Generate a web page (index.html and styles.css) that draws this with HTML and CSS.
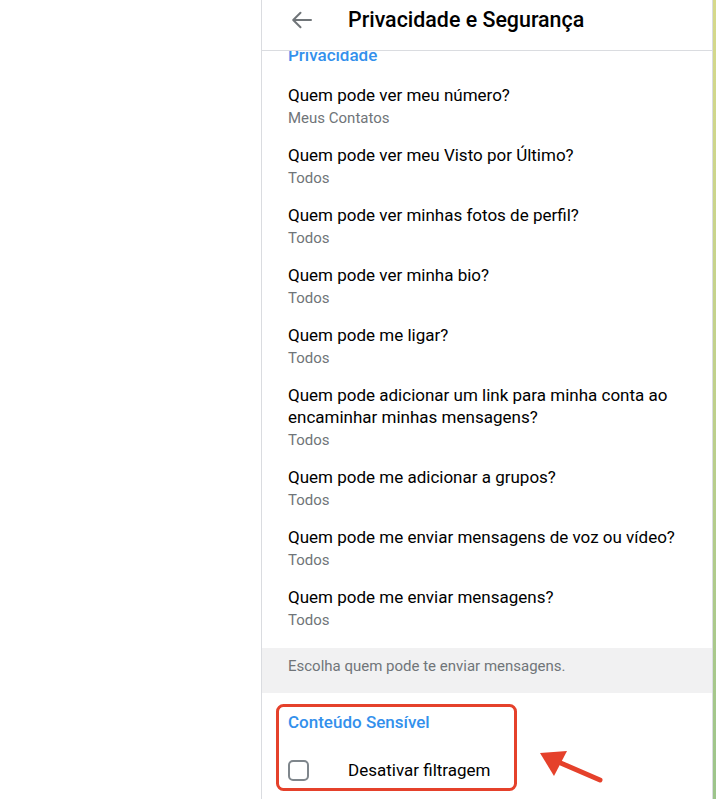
FILE: index.html
```html
<!DOCTYPE html>
<html lang="pt">
<head>
    <meta charset="UTF-8">
    <meta name="viewport" content="width=device-width, initial-scale=1.0">
    <title>Privacidade e Segurança</title>
    <link rel="stylesheet" href="styles.css">
</head>
<body>
    <div class="page">
        <div class="sidebar"></div>

        <div class="panel">
            <div class="panel-header">
                <button class="back-btn" aria-label="Voltar">
                    <svg width="24" height="24" viewBox="0 0 24 24">
                        <path d="M21 12H3.5M10.5 4.7L3.2 12 10.5 19.3" fill="none" stroke="#707579" stroke-width="2" stroke-linecap="round" stroke-linejoin="round"/>
                    </svg>
                </button>
                <span class="panel-title">Privacidade e Segurança</span>
            </div>

            <div class="panel-body">
                <div class="section">
                    <div class="section-title">Privacidade</div>

                    <div class="row">
                        <div class="row-title">Quem pode ver meu número?</div>
                        <div class="row-subtitle">Meus Contatos</div>
                    </div>
                    <div class="row">
                        <div class="row-title">Quem pode ver meu Visto por Último?</div>
                        <div class="row-subtitle">Todos</div>
                    </div>
                    <div class="row">
                        <div class="row-title">Quem pode ver minhas fotos de perfil?</div>
                        <div class="row-subtitle">Todos</div>
                    </div>
                    <div class="row">
                        <div class="row-title">Quem pode ver minha bio?</div>
                        <div class="row-subtitle">Todos</div>
                    </div>
                    <div class="row">
                        <div class="row-title">Quem pode me ligar?</div>
                        <div class="row-subtitle">Todos</div>
                    </div>
                    <div class="row">
                        <div class="row-title">Quem pode adicionar um link para minha conta ao encaminhar minhas mensagens?</div>
                        <div class="row-subtitle">Todos</div>
                    </div>
                    <div class="row">
                        <div class="row-title">Quem pode me adicionar a grupos?</div>
                        <div class="row-subtitle">Todos</div>
                    </div>
                    <div class="row">
                        <div class="row-title">Quem pode me enviar mensagens de voz ou vídeo?</div>
                        <div class="row-subtitle">Todos</div>
                    </div>
                    <div class="row">
                        <div class="row-title">Quem pode me enviar mensagens?</div>
                        <div class="row-subtitle">Todos</div>
                    </div>
                </div>

                <div class="section-caption">Escolha quem pode te enviar mensagens.</div>

                <div class="section section-sensitive">
                    <div class="section-title">Conteúdo Sensível</div>
                    <label class="checkbox-row">
                        <span class="checkbox"></span>
                        <span class="checkbox-label">Desativar filtragem</span>
                    </label>
                </div>
            </div>
        </div>

        <div class="wallpaper"></div>
    </div>

    <!-- annotation drawn over the screenshot -->
    <svg class="annotation" width="716" height="799" viewBox="0 0 716 799">
        <rect x="277.5" y="705.5" width="238" height="84" rx="6" fill="none" stroke="#e5412b" stroke-width="3"/>
        <line x1="600" y1="780" x2="556" y2="761" stroke="#e5412b" stroke-width="5" stroke-linecap="round"/>
        <polygon points="540,753 567,751 554,776" fill="#e5412b"/>
    </svg>
</body>
</html>
```

FILE: styles.css
```css
body {
    margin: 0;
    font-family: Roboto, "Noto Sans", Arial, sans-serif;
    background-color: #fff;
    color: #000;
}
.page {
    display: flex;
    height: 799px;
    overflow: hidden;
}
.sidebar {
    width: 261px;
    flex-shrink: 0;
    background-color: #fff;
}
.panel {
    width: 450px;
    flex-shrink: 0;
    border-left: 1px solid #dadce0;
    border-right: 1px solid #dadce0;
    background-color: #fff;
    overflow: hidden;
}
.wallpaper {
    flex: 1;
    background: linear-gradient(#d6d98b, #bfd08c 50%, #9cc48b);
}
.panel-header {
    position: relative;
    z-index: 1;
    display: flex;
    align-items: center;
    height: 39px;
    padding-bottom: 11px;
    border-bottom: 1px solid #dadce0;
    background-color: #fff;
}
.back-btn {
    display: flex;
    width: 24px;
    height: 24px;
    margin-left: 28px;
    padding: 0;
    border: none;
    background: none;
    cursor: pointer;
}
.panel-title {
    margin-left: 34px;
    font-size: 21.4px;
    font-weight: 500;
}
.panel-body {
    margin-top: -6px;
}
.section {
    padding: 0 26px 10px;
}
.section-title {
    color: #3390ec;
    font-size: 17px;
    font-weight: 500;
    line-height: 20px;
    margin-bottom: 11px;
}
.row {
    padding: 8px 0 7px;
    cursor: pointer;
}
.row-title {
    font-size: 17px;
    line-height: 22px;
}
.row-subtitle {
    margin-top: 2px;
    font-size: 15px;
    line-height: 21px;
    color: #707579;
}
.section-caption {
    padding: 8px 26px 17px;
    background-color: #f1f1f2;
    color: #707579;
    font-size: 15px;
    line-height: 20px;
}
.section-sensitive {
    padding-top: 19px;
}
.section-sensitive .section-title {
    margin-bottom: 18px;
}
.checkbox-row {
    display: flex;
    align-items: center;
    height: 40px;
    cursor: pointer;
}
.checkbox {
    width: 17px;
    height: 17px;
    border: 2px solid #7f868c;
    border-radius: 5px;
}
.checkbox-label {
    margin-left: 39px;
    font-size: 17px;
}
.annotation {
    position: absolute;
    top: 0;
    left: 0;
    pointer-events: none;
}
```
